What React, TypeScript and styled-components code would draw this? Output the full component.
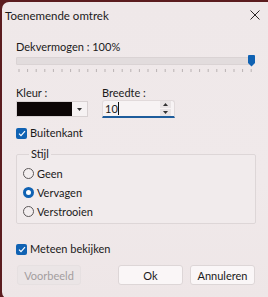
import React from "react";
import styled, { createGlobalStyle } from "styled-components";

const Global = createGlobalStyle`
  html, body { margin: 0; padding: 0; }
  body {
    background: #5b1c1f;
    width: 268px;
    height: 297px;
    overflow: hidden;
    font-family: Lato, "Noto Sans", sans-serif;
    font-size: 11px;
    color: #1b1a1a;
  }
`;

const Window = styled.div`
  margin: 2px 0 0 2px;
  width: 266px;
  height: 297px;
  background: linear-gradient(180deg, #efe8e9 0%, #f0e9ea 60%, #eee6e7 100%);
  border-radius: 7px 0 0 7px;
  display: flex;
  flex-direction: column;
  box-sizing: border-box;
`;

const TitleBar = styled.div`
  height: 26px;
  display: flex;
  align-items: center;
  justify-content: space-between;
  padding: 0 8px 0 3px;
  font-size: 11.5px;
`;

const Body = styled.div`
  padding: 11px 12px 0 14px;
  display: flex;
  flex-direction: column;
`;

const Label = styled.div<{ $mt?: number }>`
  line-height: 16px;
  margin-top: ${(p) => p.$mt ?? 0}px;
`;

const SliderWrap = styled.div`
  position: relative;
  width: 240px;
`;

const Track = styled.div`
  margin-top: 2px;
  height: 6px;
  width: 234px;
  background: #e2dcdd;
  border: 1px solid #dad3d4;
  border-radius: 1px;
`;

const Thumb = styled.svg`
  position: absolute;
  left: 232px;
  top: 0;
`;

const Ticks = styled.svg`
  display: block;
  margin-top: 4px;
`;

const Row = styled.div`
  display: flex;
  align-items: flex-start;
  margin-top: 13px;
`;

const Col = styled.div<{ $w: number }>`
  width: ${(p) => p.$w}px;
  display: flex;
  flex-direction: column;
`;

const ColorCombo = styled.div`
  display: flex;
  width: 72px;
  height: 16px;
  background: #f6f2f3;
  border: 1px solid #d8d1d2;
  box-sizing: border-box;
`;

const Swatch = styled.div`
  width: 55px;
  background: #0c0606;
`;

const Arrow = styled.div`
  flex: 1;
  display: flex;
  align-items: center;
  justify-content: center;
`;

const Spin = styled.div`
  margin-top: -1px;
  display: flex;
  align-items: center;
  width: 73px;
  height: 18px;
  background: #f7f3f4;
  border: 1px solid #e1dadb;
  border-bottom: 2px solid #1e5d9c;
  border-radius: 3px 3px 0 0;
  box-sizing: border-box;
  padding-left: 2px;
`;

const SpinText = styled.div`
  flex: 1;
  display: flex;
  align-items: center;
  line-height: 14px;
`;

const Caret = styled.span`
  display: inline-block;
  width: 1px;
  height: 13px;
  background: #111;
`;

const SpinBtns = styled.div`
  width: 11px;
  margin-right: 3px;
  display: flex;
  flex-direction: column;
  gap: 1px;
`;

const SpinBtn = styled.div`
  height: 7px;
  background: #e9e4e5;
  display: flex;
  align-items: center;
  justify-content: center;
`;

const CheckRow = styled.label<{ $mt: number }>`
  display: flex;
  align-items: center;
  gap: 3px;
  margin-top: ${(p) => p.$mt}px;
  line-height: 16px;
`;

const Box = styled.span`
  width: 11px;
  height: 11px;
  border-radius: 2px;
  background: #1062b3;
  display: flex;
  align-items: center;
  justify-content: center;
`;

const Group = styled.fieldset`
  margin: 6px 0 0 0;
  padding: 3px 0 2px 6px;
  width: 240px;
  box-sizing: border-box;
  border: 1px solid #ddd6d7;
  border-radius: 2px;
  background: #f1ebec;
  display: flex;
  flex-direction: column;
`;

const Legend = styled.legend`
  padding: 0 2px;
  margin-left: 6px;
  line-height: 14px;
`;

const RadioRow = styled.label`
  display: flex;
  align-items: center;
  gap: 3px;
  height: 19px;
`;

const Radio = styled.span<{ $on?: boolean }>`
  width: 11px;
  height: 11px;
  border-radius: 50%;
  box-sizing: border-box;
  border: ${(p) => (p.$on ? "3px solid #1062b3" : "1px solid #5d5859")};
  background: ${(p) => (p.$on ? "#ffffff" : "#f3eeef")};
`;

const Buttons = styled.div`
  margin-top: 8px;
  display: flex;
  align-items: center;
`;

const Button = styled.div<{ $disabled?: boolean; $w: number; $ml: number }>`
  width: ${(p) => p.$w}px;
  margin-left: ${(p) => p.$ml}px;
  height: 20px;
  box-sizing: border-box;
  border-radius: 3px;
  display: flex;
  align-items: center;
  justify-content: center;
  background: ${(p) => (p.$disabled ? "#ebe5e6" : "#faf6f7")};
  border: 1px solid ${(p) => (p.$disabled ? "#e6e0e1" : "#ddd6d7")};
  color: ${(p) => (p.$disabled ? "#a39d9e" : "#1b1a1a")};
`;

const Check = () => (
  <Box>
    <svg width="8" height="7" viewBox="0 0 8 7">
      <path d="M1 3.6 L3 5.6 L7 1.2" fill="none" stroke="#fff" strokeWidth="1.2" />
    </svg>
  </Box>
);

export default function App() {
  const ticks = Array.from({ length: 28 }, (_, i) => 3 + i * 8.6);
  return (
    <>
      <Global />
      <Window>
        <TitleBar>
          <span>Toenemende omtrek</span>
          <svg width="10" height="10" viewBox="0 0 10 10">
            <path d="M0.5 0.5 L9.5 9.5 M9.5 0.5 L0.5 9.5" stroke="#2a2526" strokeWidth="1" />
          </svg>
        </TitleBar>
        <Body>
          <Label>Dekvermogen : 100%</Label>
          <SliderWrap>
            <Track />
            <Thumb width="7" height="12" viewBox="0 0 7 12">
              <path d="M0 1 Q0 0 1 0 H6 Q7 0 7 1 V8 L3.5 11.5 L0 8 Z" fill="#1062b3" />
            </Thumb>
            <Ticks width="240" height="3" viewBox="0 0 240 3">
              {ticks.map((x, i) => (
                <line key={i} x1={x} y1="0" x2={x} y2="3" stroke="#b9b2b3" strokeWidth="1" />
              ))}
            </Ticks>
          </SliderWrap>
          <Row>
            <Col $w={86}>
              <Label>Kleur :</Label>
              <ColorCombo>
                <Swatch />
                <Arrow>
                  <svg width="5" height="3" viewBox="0 0 5 3">
                    <path d="M0 0 H5 L2.5 3 Z" fill="#333" />
                  </svg>
                </Arrow>
              </ColorCombo>
            </Col>
            <Col $w={80}>
              <Label>Breedte :</Label>
              <Spin>
                <SpinText>
                  10<Caret />
                </SpinText>
                <SpinBtns>
                  <SpinBtn>
                    <svg width="5" height="3" viewBox="0 0 5 3">
                      <path d="M0 3 H5 L2.5 0 Z" fill="#333" />
                    </svg>
                  </SpinBtn>
                  <SpinBtn>
                    <svg width="5" height="3" viewBox="0 0 5 3">
                      <path d="M0 0 H5 L2.5 3 Z" fill="#333" />
                    </svg>
                  </SpinBtn>
                </SpinBtns>
              </Spin>
            </Col>
          </Row>
          <CheckRow $mt={7}>
            <Check />
            Buitenkant
          </CheckRow>
          <Group>
            <Legend>Stijl</Legend>
            <RadioRow>
              <Radio />
              Geen
            </RadioRow>
            <RadioRow>
              <Radio $on />
              Vervagen
            </RadioRow>
            <RadioRow>
              <Radio />
              Verstrooien
            </RadioRow>
          </Group>
          <CheckRow $mt={17}>
            <Check />
            Meteen bekijken
          </CheckRow>
          <Buttons>
            <Button $disabled $w={64} $ml={1}>Voorbeeld</Button>
            <Button $w={65} $ml={37}>Ok</Button>
            <Button $w={65} $ml={7}>Annuleren</Button>
          </Buttons>
        </Body>
      </Window>
    </>
  );
}
